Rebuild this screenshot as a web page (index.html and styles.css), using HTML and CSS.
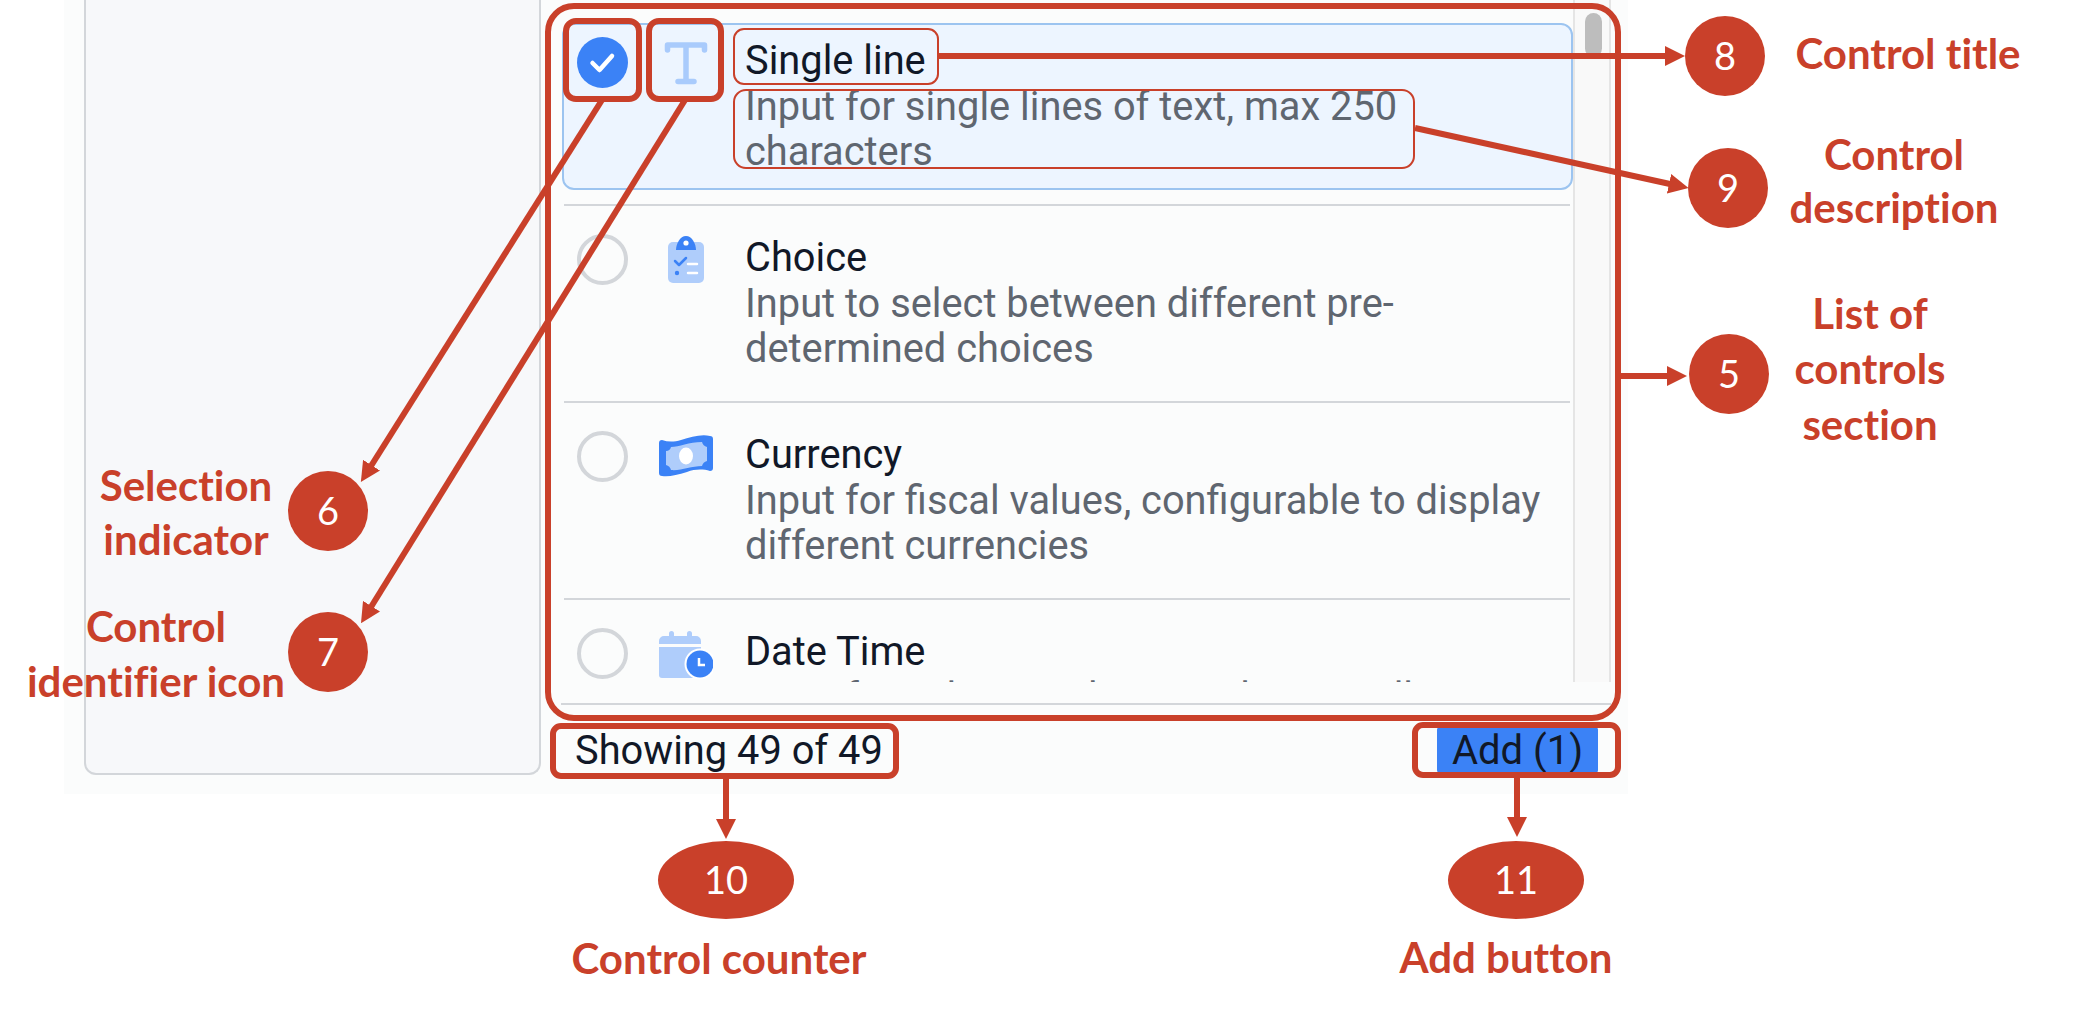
FILE: index.html
```html
<!DOCTYPE html>
<html lang="en">
<head>
  <meta charset="UTF-8">
  <meta name="viewport" content="width=device-width, initial-scale=1.0">
  <title>List of controls</title>
  <link rel="stylesheet" href="styles.css">
</head>
<body>
  <div class="stage">
    <div class="shot">
      <aside class="side-panel"></aside>
      <main class="main">
        <div class="list-wrap">
          <div class="list">
            <div class="rows">
              <div class="control selected">
                <svg class="radio-check" viewBox="0 0 51 51"><circle cx="25.5" cy="25.5" r="25.5" fill="#3b82f6"/><path d="M15.500 26 L22.500 33 L35 19" fill="none" stroke="#fff" stroke-width="4.500" stroke-linecap="round" stroke-linejoin="round"/></svg>
                <svg class="icon" viewBox="0 0 54 54"><path d="M8.500 13 V8 H45.500 V13 M27 8 V44.500 M19 44.500 H35" fill="none" stroke="#a9cbfc" stroke-width="5.500" stroke-linecap="round" stroke-linejoin="round"/></svg>
                <div class="control-text">
                  <div class="control-title">Single line</div>
                  <div class="control-desc">Input for single lines of text, max 250 characters</div>
                </div>
              </div>
              <div class="divider"></div>
              <div class="control">
                <div class="radio"></div>
                <svg class="icon" viewBox="0 0 54 54">
                  <rect x="9" y="8" width="36" height="41" rx="5" fill="#afcdfb"/>
                  <path d="M17 16 C17 10 21 2 27 2 C33 2 37 10 37 16 Z" fill="#3b82f6"/>
                  <circle cx="27" cy="9" r="2.600" fill="#fff"/>
                  <path d="M16 27 L20 31 L27 24" fill="none" stroke="#3b82f6" stroke-width="2.500" stroke-linecap="round" stroke-linejoin="round"/>
                  <circle cx="18" cy="39" r="2.200" fill="#3b82f6"/>
                  <path d="M29 30 H38 M29 39 H38" stroke="#fff" stroke-width="2.500" stroke-linecap="round"/>
                </svg>
                <div class="control-text">
                  <div class="control-title">Choice</div>
                  <div class="control-desc">Input to select between different pre-determined choices</div>
                </div>
              </div>
              <div class="divider"></div>
              <div class="control">
                <div class="radio"></div>
                <svg class="icon" viewBox="0 0 54 54">
                  <path d="M3 9 C9 11 15 11 22 9 C32 6 42 3 51 5 Q54 5 54 8 V37 Q54 40 51 40 C44 38 36 38 28 41 C18 44 10 46 3 45 Q0 45 0 42 V12 Q0 9 3 9 Z" fill="#3b82f6"/>
                  <path d="M12 16 C20 16 30 11 43 11 Q44 15 48 16 V30 Q44 31 43 35 C32 35 22 40 12 39 Q11 35 7 34 V20 Q11 20 12 16 Z" fill="#afcdfb"/>
                  <ellipse cx="27" cy="25" rx="7" ry="8.500" fill="#fff"/>
                </svg>
                <div class="control-text">
                  <div class="control-title">Currency</div>
                  <div class="control-desc">Input for fiscal values, configurable to display different currencies</div>
                </div>
              </div>
              <div class="divider"></div>
              <div class="control">
                <div class="radio"></div>
                <svg class="icon" viewBox="0 0 54 54">
                  <path d="M10 8 V5.500 a2.500 2.500 0 0 1 5 0 V8 H28 V5.500 a2.500 2.500 0 0 1 5 0 V8 H37 a5 5 0 0 1 5 5 V16 H0 V13 a5 5 0 0 1 5 -5 Z" fill="#afcdfb"/>
                  <path d="M0 19 H42 V47 a3 3 0 0 1 -3 3 H3 a3 3 0 0 1 -3 -3 Z" fill="#afcdfb"/>
                  <circle cx="41" cy="36" r="15.500" fill="#fff"/>
                  <circle cx="41" cy="36" r="13.500" fill="#3b82f6"/>
                  <path d="M40 30 V37 H46" fill="none" stroke="#fff" stroke-width="2.500"/>
                </svg>
                <div class="control-text">
                  <div class="control-title">Date Time</div>
                  <div class="control-desc">Input for selecting dates and optionally time</div>
                </div>
              </div>
            </div>
            <div class="scrollbar"><div class="thumb"></div></div>
          </div>
        </div>
        <div class="footer">
          <span class="counter">Showing 49 of 49</span>
          <button class="add-btn" type="button">Add (1)</button>
        </div>
      </main>
    </div>

    <svg class="notes" viewBox="0 0 2096 1018">
      <defs>
        <marker id="head" viewBox="0 0 20 20" refX="1" refY="10" markerWidth="20" markerHeight="20" markerUnits="userSpaceOnUse" orient="auto">
          <path d="M0 0 L20 10 L0 20 Z" fill="#c9402a"/>
        </marker>
      </defs>

      <rect class="box" x="548" y="6" width="1070" height="712" rx="26"/>
      <rect class="box" x="566" y="21" width="73" height="78" rx="10"/>
      <rect class="box" x="649" y="21" width="72" height="78" rx="10"/>
      <rect class="box" x="553" y="726" width="343" height="50" rx="8"/>
      <rect class="box" x="1415" y="725" width="203" height="50" rx="8"/>
      <rect class="box-thin" x="734" y="29" width="204" height="55" rx="10"/>
      <rect class="box-thin" x="734" y="90" width="680" height="78" rx="12"/>

      <line class="arrow" x1="602" y1="100" x2="371" y2="466"/>
      <line class="arrow" x1="685" y1="100" x2="371" y2="607"/>
      <line class="arrow" x1="939" y1="56" x2="1666" y2="56"/>
      <line class="arrow" x1="1415" y1="128" x2="1670" y2="184"/>
      <line class="arrow" x1="1621" y1="376" x2="1668" y2="376"/>
      <line class="arrow" x1="726" y1="778" x2="726" y2="820"/>
      <line class="arrow" x1="1517" y1="778" x2="1517" y2="818"/>

      <circle class="dot" cx="1725" cy="56" r="40"/>
      <circle class="dot" cx="1728" cy="188" r="40"/>
      <circle class="dot" cx="1729" cy="374" r="40"/>
      <circle class="dot" cx="328" cy="511" r="40"/>
      <circle class="dot" cx="328" cy="652" r="40"/>
      <ellipse class="dot" cx="726" cy="880" rx="68" ry="39"/>
      <ellipse class="dot" cx="1516" cy="880" rx="68" ry="39"/>

      <text class="num" x="1725" y="70">8</text>
      <text class="num" x="1728" y="202">9</text>
      <text class="num" x="1729" y="388">5</text>
      <text class="num" x="328" y="525">6</text>
      <text class="num" x="328" y="666">7</text>
      <text class="num" x="726" y="894">10</text>
      <text class="num" x="1516" y="894">11</text>

      <text class="label" x="1908" y="69">Control title</text>
      <text class="label" x="1894" y="170">Control</text>
      <text class="label" x="1894" y="223">description</text>
      <text class="label" x="1870" y="329">List of</text>
      <text class="label" x="1870" y="384">controls</text>
      <text class="label" x="1870" y="440">section</text>
      <text class="label" x="186" y="501">Selection</text>
      <text class="label" x="186" y="555">indicator</text>
      <text class="label" x="156" y="642">Control</text>
      <text class="label" x="156" y="697">identifier icon</text>
      <text class="label" x="719" y="974">Control counter</text>
      <text class="label" x="1506" y="973">Add button</text>
    </svg>
  </div>
</body>
</html>
```

FILE: styles.css
```css
body {
  margin: 0;
  background-color: #fff;
  font-family: Roboto, sans-serif;
}

.stage {
  position: relative;
  width: 2096px;
  height: 1018px;
  overflow: hidden;
}

.shot {
  display: flex;
  gap: 20px;
  width: 1564px;
  height: 794px;
  margin-left: 64px;
  padding-left: 20px;
  box-sizing: border-box;
  background-color: #fbfcfc;
}

.side-panel {
  width: 457px;
  height: 775px;
  box-sizing: border-box;
  background-color: #f7f8fa;
  border: 2px solid #d3d6da;
  border-top: none;
  border-radius: 0 0 12px 12px;
}

.main {
  width: 1050px;
}

.list-wrap {
  height: 705px;
  box-sizing: border-box;
  border-bottom: 2px solid #d3d6da;
}

.list {
  display: flex;
  height: 682px;
  overflow: hidden;
}

.rows {
  flex: 1;
  padding: 23px 0 0 1px;
}

.control {
  display: flex;
  height: 167px;
  box-sizing: border-box;
  padding: 12px 14px 0 13px;
  border: 2px solid transparent;
  border-radius: 12px;
}

.control.selected {
  background-color: #edf5ff;
  border-color: #9cc4f0;
}

.divider {
  height: 2px;
  margin: 14px 3px 14px 2px;
  background-color: #d3d6da;
}

.radio,
.radio-check {
  flex: none;
  width: 51px;
  height: 51px;
  box-sizing: border-box;
}

.radio {
  border: 4px solid #d3d6da;
  border-radius: 50%;
}

.icon {
  flex: none;
  width: 54px;
  height: 54px;
  margin: 0 32px 0 31px;
}

.control-text {
  flex: 1;
  padding-top: 1px;
}

.control-title {
  margin-bottom: 1px;
  font-size: 39.8px;
  line-height: 45px;
  color: #111827;
}

.control-desc {
  font-size: 39.8px;
  line-height: 45px;
  color: #5f6670;
}

.scrollbar {
  flex: none;
  width: 38px;
  box-sizing: border-box;
  padding: 13px 7px 0 10px;
  background-color: #f9f9f9;
  border-left: 2px solid #e5e5e5;
  border-right: 2px solid #e5e5e5;
}

.thumb {
  height: 44px;
  background-color: #bdbdbd;
  border-radius: 10px;
}

.footer {
  display: flex;
  justify-content: space-between;
  align-items: center;
  height: 46px;
  margin-top: 22px;
  padding: 0 13px 0 14px;
}

.counter {
  font-size: 39.8px;
  color: #111827;
}

.add-btn {
  width: 161px;
  height: 46px;
  padding: 0;
  font-family: Roboto, sans-serif;
  font-size: 40px;
  color: #111827;
  background-color: #3b82f6;
  border: none;
  border-radius: 3px;
}

.notes {
  position: absolute;
  left: 0;
  top: 0;
  width: 2096px;
  height: 1018px;
}

.box {
  fill: none;
  stroke: #c9402a;
  stroke-width: 6;
}

.box-thin {
  fill: none;
  stroke: #c9402a;
  stroke-width: 2;
}

.arrow {
  stroke: #c9402a;
  stroke-width: 6;
  marker-end: url(#head);
}

.dot {
  fill: #c9402a;
}

.num {
  font-family: Lato, sans-serif;
  font-size: 38px;
  fill: #fff;
  text-anchor: middle;
}

.label {
  font-family: Lato, sans-serif;
  font-size: 42px;
  font-weight: 700;
  font-variant-ligatures: none;
  fill: #c9402a;
  text-anchor: middle;
}
```
